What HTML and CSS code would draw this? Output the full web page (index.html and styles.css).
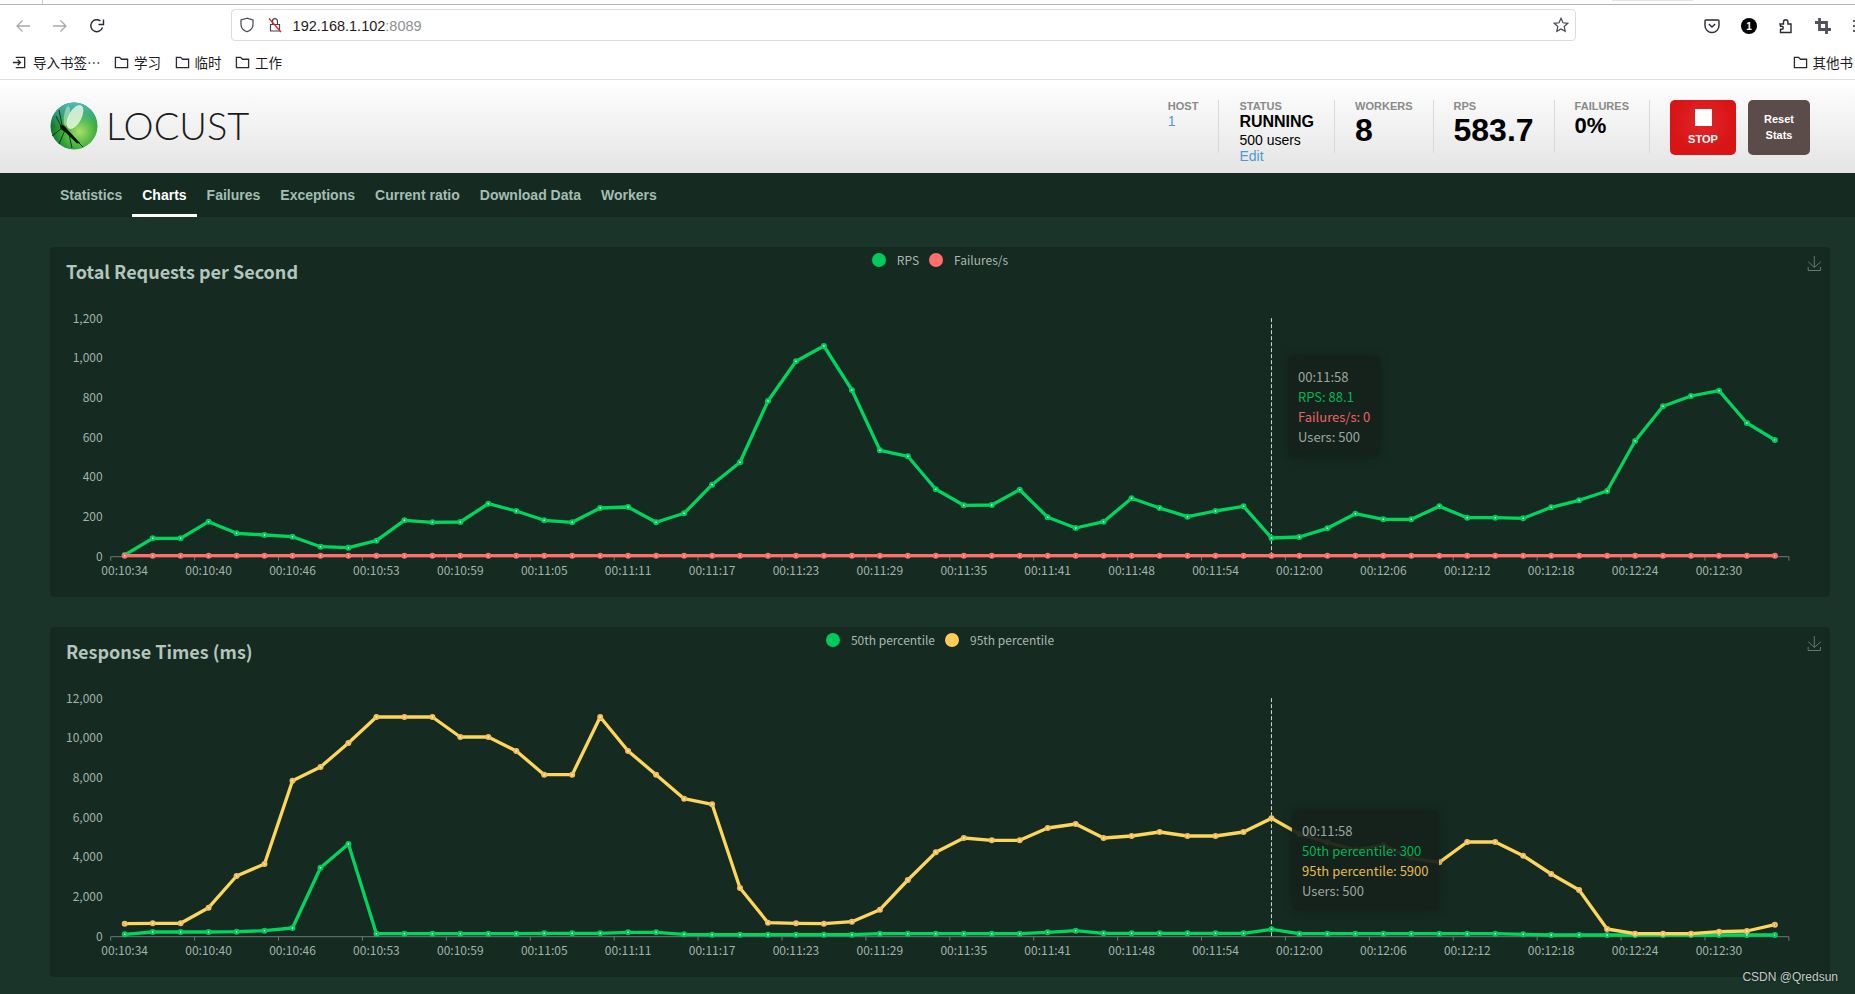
FILE: index.html
```html
<!DOCTYPE html>
<html lang="en">
<head>
<meta charset="utf-8">
<title>Locust</title>
<link rel="stylesheet" href="styles.css">
</head>
<body>
<div class="browser">
  <div class="tabstrip"><span class="tab-tick"></span><span class="tab-edge"></span></div>
  <div class="toolbar">
    <svg class="tb-icon" viewBox="0 0 16 16"><path class="ic-dim" d="M15 8H2M7.5 2.5 2 8l5.500 5.500"/></svg>
    <svg class="tb-icon" viewBox="0 0 16 16"><path class="ic-dim" d="M1 8h13M8.500 2.500 14 8l-5.500 5.500"/></svg>
    <svg class="tb-icon" viewBox="0 0 16 16"><path class="ic-dark" d="M13.500 9.500A6 6 0 1 1 11.500 3M9.500 6.500h5v-5" /></svg>
    <div class="urlbar">
      <svg class="url-shield" viewBox="0 0 16 16"><path class="ic-line" d="M8 1.200 2 3v4.500c0 3.500 2.800 6 6 7.300 3.200-1.300 6-3.800 6-7.300V3z"/></svg>
      <svg class="url-lock" viewBox="0 0 16 16"><path class="ic-line" d="M3.500 7.500h9V14h-9zM5.500 7.500V4.200a2.500 2.500 0 0 1 5 0v3.300"/><path class="ic-red" d="M2 1.500 14 15"/></svg>
      <span class="url-text">192.168.1.102<span class="url-port">:8089</span></span>
      <svg class="url-star" viewBox="0 0 16 16"><path class="ic-line" d="m8 1.300 2 4.500 4.800.5-3.600 3.200 1 4.800L8 11.900l-4.200 2.400 1-4.800L1.200 6.300 6 5.800z"/></svg>
    </div>
    <svg class="tb-icon tb-pocket" viewBox="0 0 16 16"><path class="ic-dark" d="M2 2h12a1 1 0 0 1 1 1v4.500a7 7 0 0 1-14 0V3a1 1 0 0 1 1-1z"/><path class="ic-dark" d="m4.800 6 3.200 3 3.200-3"/></svg>
    <span class="tb-badge">1</span>
    <svg class="tb-icon" viewBox="0 0 16 16"><path class="ic-dark" d="M2 6h3.500V4a2.200 2.200 0 0 1 4.400 0v2H13v8.500H2.500v-3.300h1.300a1.500 1.500 0 0 0 0-3H2.500z"/></svg>
    <svg class="tb-icon" viewBox="0 0 16 16"><path class="ic-crop" d="M4.500 0v11.500H16M0 4.500h11.500V16"/></svg>
    <svg class="tb-icon" viewBox="0 0 16 16"><path class="ic-dark" d="M1 3h14M1 8h14M1 13h14"/></svg>
  </div>
  <div class="bookmarks">
    <span class="bm bm-import">
      <svg class="bm-icon" viewBox="0 0 16 16"><path class="ic-dark" d="M1 8h8M6 5l3 3-3 3M4 2.500h9.500v11H4"/></svg>导入书签…</span>
    <span class="bm"><svg class="bm-icon" viewBox="0 0 16 16"><path class="ic-dark" d="M1.500 13.500v-11h4.500l2 2h6.500v9z"/></svg>学习</span>
    <span class="bm"><svg class="bm-icon" viewBox="0 0 16 16"><path class="ic-dark" d="M1.500 13.500v-11h4.500l2 2h6.500v9z"/></svg>临时</span>
    <span class="bm"><svg class="bm-icon" viewBox="0 0 16 16"><path class="ic-dark" d="M1.500 13.500v-11h4.500l2 2h6.500v9z"/></svg>工作</span>
    <span class="bm bm-other"><svg class="bm-icon" viewBox="0 0 16 16"><path class="ic-dark" d="M1.500 13.500v-11h4.500l2 2h6.500v9z"/></svg>其他书</span>
  </div>
</div>

<header class="app-header">
  <div class="logo">
    <svg class="logo-mark" viewBox="0 0 48 48">
      <defs>
        <radialGradient id="orb" cx="62%" cy="62%" r="70%">
          <stop offset="0" stop-color="#a6e06a"/>
          <stop offset=".5" stop-color="#3eb03a"/>
          <stop offset=".8" stop-color="#16802f"/>
          <stop offset="1" stop-color="#0c5c2c"/>
        </radialGradient>
        <linearGradient id="orbtop" x1="0" y1="0" x2="0" y2="1">
          <stop offset="0" stop-color="#4fc0bc"/>
          <stop offset=".5" stop-color="#4fc0bc" stop-opacity="0"/>
        </linearGradient>
      </defs>
      <circle cx="24" cy="24" r="23.500" fill="url(#orb)"/>
      <circle cx="24" cy="24" r="23.500" fill="url(#orbtop)"/>
      <ellipse cx="25" cy="15" rx="6.500" ry="13" transform="rotate(28 25 15)" fill="#f2fbea" opacity=".78"/>
      <ellipse cx="17" cy="14" rx="3" ry="10" transform="rotate(8 17 14)" fill="#e8f8e0" opacity=".45"/>
      <path class="bug-body" d="M10 23c3-1 5 1 7 4l13 14-3 .5L15 30c-3-2-6-4-5-7z"/>
      <path class="bug-leg" d="M9 8l3 15M6 14l5 10M15 28 9 42M19 32l3 14M24 36l9 9M12 26 2 34"/>
    </svg>
    <span class="logo-text">LOCUST</span>
  </div>
  <div class="stats">
    <div class="stat"><div class="stat-label">HOST</div><div class="stat-link">1</div></div>
    <div class="stat">
      <div class="stat-label">STATUS</div>
      <div class="stat-status">RUNNING</div>
      <div class="stat-users">500 users</div>
      <div class="stat-link stat-edit">Edit</div>
    </div>
    <div class="stat"><div class="stat-label">WORKERS</div><div class="stat-big">8</div></div>
    <div class="stat"><div class="stat-label">RPS</div><div class="stat-big">583.7</div></div>
    <div class="stat"><div class="stat-label">FAILURES</div><div class="stat-mid">0%</div></div>
    <div class="actions">
      <div class="btn btn-stop"><span class="stop-square"></span>STOP</div>
      <div class="btn btn-reset">Reset<br>Stats</div>
    </div>
  </div>
</header>

<nav class="tabs">
  <a class="tab">Statistics</a>
  <a class="tab tab-active">Charts</a>
  <a class="tab">Failures</a>
  <a class="tab">Exceptions</a>
  <a class="tab">Current ratio</a>
  <a class="tab">Download Data</a>
  <a class="tab">Workers</a>
</nav>

<main class="charts">
  <section class="card">
    <div class="card-head">
      <h2 class="card-title">Total Requests per Second</h2>
      <div class="legend">
        <span class="legend-dot dot-green"></span><span class="legend-label">RPS</span>
        <span class="legend-dot dot-red"></span><span class="legend-label">Failures/s</span>
      </div>
      <svg class="save-icon" viewBox="0 0 60 60"><path d="M4.700 22.900 29.300 45.500 54.700 23.400M4.600 43.600V58h49.200V43.600M29.200 45.100V0"/></svg>
    </div>
    <svg class="plot" id="plot-rps" viewBox="0 0 1780 290"></svg>
    <div class="tooltip tooltip-rps">
      <div>00:11:58</div>
      <div class="tip-green">RPS: 88.1</div>
      <div class="tip-red">Failures/s: 0</div>
      <div>Users: 500</div>
    </div>
  </section>
  <section class="card">
    <div class="card-head">
      <h2 class="card-title">Response Times (ms)</h2>
      <div class="legend">
        <span class="legend-dot dot-green"></span><span class="legend-label">50th percentile</span>
        <span class="legend-dot dot-yellow"></span><span class="legend-label">95th percentile</span>
      </div>
      <svg class="save-icon" viewBox="0 0 60 60"><path d="M4.700 22.900 29.300 45.500 54.700 23.400M4.600 43.600V58h49.200V43.600M29.200 45.100V0"/></svg>
    </div>
    <svg class="plot" id="plot-times" viewBox="0 0 1780 290"></svg>
    <div class="tooltip tooltip-times">
      <div>00:11:58</div>
      <div class="tip-green">50th percentile: 300</div>
      <div class="tip-yellow">95th percentile: 5900</div>
      <div>Users: 500</div>
    </div>
  </section>
</main>
<div class="watermark">CSDN @Qredsun</div>
<script src="charts.js"></script>
</body>
</html>
```
FILE: styles.css
```css
* { box-sizing: border-box; }
html, body { margin: 0; padding: 0; }
body {
  width: 1855px;
  height: 994px;
  overflow: hidden;
  position: relative;
  background: #1a342a;
  font-family: "Liberation Sans", Arial, sans-serif;
}

/* browser chrome */
.browser { background: #fff; }
.tabstrip {
  height: 5px;
  border-bottom: 1px solid #b4b4b4;
  background: #fdfdfd;
  position: relative;
}
.tab-tick { position: absolute; left: 42px; top: 0; width: 1px; height: 4px; background: #ccc; }
.tab-edge { position: absolute; left: 1612px; top: 0; width: 81px; height: 1px; background: #e4e4e4; }
.toolbar {
  height: 42px;
  display: flex;
  align-items: center;
  padding-left: 15px;
  gap: 21px;
  overflow: hidden;
}
.tb-icon { width: 16px; height: 16px; flex: none; fill: none; }
.ic-dim { fill: none; stroke: #a9a9ae; stroke-width: 1.300; }
.ic-dark { fill: none; stroke: #2b2a33; stroke-width: 1.400; }
.ic-line { fill: none; stroke: #45454c; stroke-width: 1.200; }
.ic-red { fill: none; stroke: #d8203a; stroke-width: 1.300; }
.ic-crop { fill: none; stroke: #50505a; stroke-width: 2.800; }
.urlbar {
  width: 1345px;
  height: 32px;
  margin-left: 105px;
  margin-right: 107px;
  margin-top: -2px;
  flex: none;
  border: 1px solid #dcdcde;
  border-radius: 4px;
  display: flex;
  align-items: center;
  padding-left: 7px;
  padding-right: 6px;
}
.url-shield, .url-lock, .url-star { width: 16px; height: 16px; flex: none; }
.url-lock { margin-left: 12px; }
.url-text { margin-left: 9.600px; padding-top: 2px; font-size: 14.500px; color: #1c1b22; }
.url-port { color: #8f8f94; }
.url-star { margin-left: auto; }
.tb-pocket { margin-left: 0; }
.tb-badge {
  width: 16px;
  height: 16px;
  flex: none;
  border-radius: 50%;
  background: #000;
  color: #fff;
  font-size: 10px;
  font-weight: 700;
  display: flex;
  align-items: center;
  justify-content: center;
}
.bookmarks {
  height: 33px;
  border-bottom: 1px solid #dfdfe0;
  display: flex;
  align-items: center;
  padding-left: 12px;
  padding-bottom: 2px;
  font-family: "Noto Sans CJK SC", sans-serif;
  font-size: 13.500px;
  color: #1c1b22;
  white-space: nowrap;
}
.bm { display: flex; align-items: center; gap: 5px; margin-right: 13.500px; }
.bm-import { gap: 6px; }
.bm-icon { width: 15px; height: 15px; flex: none; }
.bm-other { margin-left: auto; margin-right: 2px; }

/* app header */
.app-header {
  height: 93px;
  display: flex;
  justify-content: space-between;
  padding: 0 45px 0 50px;
  background: linear-gradient(#ffffff, #e4e4e4);
}
.logo { display: flex; align-items: center; gap: 8px; padding-bottom: 1px; }
.logo-mark { width: 48px; height: 48px; flex: none; }
.bug-body { fill: #0a140c; }
.bug-leg { fill: none; stroke: #0a140c; stroke-width: .800; }
.logo-text {
  font-family: Lato, sans-serif;
  font-weight: 300;
  font-size: 38px;
  line-height: 44px;
  padding-bottom: 3px;
  color: #1a1a1a;
}
.stats { display: flex; align-items: flex-start; padding-top: 20px; }
.stat {
  height: 53px;
  padding: 0 20px;
  border-right: 1px solid #d9d9d9;
}
.stat-label { font-size: 11px; font-weight: 700; color: #8a8a8a; line-height: 12px; }
.stat-link { font-size: 14px; color: #4d9bcf; line-height: 18px; }
.stat-status { font-size: 16px; font-weight: 700; color: #000; line-height: 18px; margin-top: 1px; }
.stat-users { font-size: 14px; color: #000; line-height: 16px; margin-top: 1px; }
.stat-edit { line-height: 16px; margin-top: 0; }
.stat-big { font-size: 32px; font-weight: 700; color: #000; line-height: 36px; }
.stat-mid { font-size: 22px; font-weight: 700; color: #000; line-height: 26px; margin-top: 1px; }
.actions { display: flex; gap: 12px; margin-left: 20px; }
.btn {
  height: 55px;
  border-radius: 5px;
  color: #fff;
  font-size: 11px;
  font-weight: 700;
  text-align: center;
}
.btn-stop {
  width: 66px;
  padding-top: 9px;
  line-height: 14px;
  background: radial-gradient(circle at 50% 40%, #e2262a, #d81414 70%);
}
.stop-square { display: block; width: 17px; height: 17px; background: #fff; margin: 0 auto 6px; }
.btn-reset {
  width: 62px;
  padding-top: 11px;
  line-height: 16px;
  background: #5b4b49;
}

/* tabs */
.tabs {
  height: 44px;
  display: flex;
  padding-left: 50px;
  background: #152b22;
}
.tab {
  padding: 0 10px;
  height: 44px;
  line-height: 44px;
  font-size: 14px;
  font-weight: 700;
  color: #a4bdb2;
}
.tab-active { color: #fff; border-bottom: 3px solid #fff; }

/* charts */
.charts {
  display: flex;
  flex-direction: column;
  gap: 30px;
  padding: 30px 25px 0 50px;
}
.card {
  position: relative;
  height: 350px;
  background: #152a21;
  border-radius: 4px;
  font-family: "Noto Sans CJK SC", "Noto Sans", sans-serif;
}
.card-head {
  height: 60px;
  display: grid;
  grid-template-columns: 1fr auto 1fr;
  align-items: start;
  padding: 0 8px;
}
.card-title {
  margin: 11px 0 0 8px;
  font-size: 18px;
  line-height: 26px;
  font-weight: 700;
  color: #b3c5bc;
}
.legend {
  display: flex;
  align-items: center;
  height: 25px;
  font-size: 12px;
  color: #a9b8b1;
}
.legend-dot { width: 14px; height: 14px; border-radius: 50%; }
.legend-label { margin-left: 11px; margin-right: 10px; }
.legend-label:last-child { margin-right: 0; }
.dot-green { background: #00ca5a; }
.dot-red { background: #ff6d6d; }
.dot-yellow { background: #ffca5a; }
.save-icon {
  justify-self: end;
  margin-top: 9px;
  width: 15px;
  height: 15px;
  fill: none;
  stroke: #66786f;
  stroke-width: 4;
}
.plot { display: block; width: 1780px; height: 290px; }
.axis-line { stroke: #6b7a74; stroke-width: 1; fill: none; }
.axis-text { font-size: 12px; fill: #a3b3ac; }
.crosshair { stroke: #d5dcd9; stroke-width: 1; stroke-dasharray: 4 2; }
.series { fill: none; stroke-width: 3.300; stroke-linejoin: round; }
.dot-core { fill: #f2fff6; stroke: none; }
.s-green { stroke: #00d65e; }
.s-red { stroke: #ff6d6d; }
.s-yellow { stroke: #fdd65a; }
.m-green { fill: none; stroke: #00ca5a; stroke-width: 2; }
.m-red { fill: none; stroke: #ff6d6d; stroke-width: 2; }
.m-yellow { fill: none; stroke: #f6bd5c; stroke-width: 2; }

.tooltip {
  position: absolute;
  padding: 11px 10px 10px;
  border-radius: 6px;
  background: rgba(22, 32, 27, .93);
  box-shadow: 0 0 8px rgba(14, 24, 19, .35);
  font-size: 13px;
  line-height: 20px;
  color: #9aa7a1;
  white-space: nowrap;
}
.tooltip-rps { left: 1238px; top: 109px; width: 92px; height: 101px; }
.tooltip-times { left: 1242px; top: 183px; width: 147px; height: 101px; }
.tip-green { color: #00b653; }
.tip-red { color: #e96464; }
.tip-yellow { color: #e6b955; }

.watermark {
  position: absolute;
  right: 17px;
  top: 969px;
  font-size: 12px;
  line-height: 16px;
  color: #c4ccc8;
  text-shadow: 0 0 2px #0c1a14;
}
```
FILE: charts.js
```js
var NS = 'http://www.w3.org/2000/svg';
var X0 = 60.7, STEP = 27.97, AXIS = 249.7;
var TICK_Y = [249.7, 209.7, 169.7, 130.3, 90.3, 50.3, 11.7];
var LABELS = ['00:10:34','00:10:40','00:10:46','00:10:53','00:10:59','00:11:05','00:11:11','00:11:17','00:11:23','00:11:29','00:11:35','00:11:41','00:11:48','00:11:54','00:12:00','00:12:06','00:12:12','00:12:18','00:12:24','00:12:30'];

function el(parent, name, attrs, text) {
  var e = document.createElementNS(NS, name);
  for (var k in attrs) e.setAttribute(k, attrs[k]);
  if (text !== undefined) e.textContent = text;
  parent.appendChild(e);
  return e;
}
function px(i) { return X0 + STEP * (i + 0.5); }

function draw(id, cfg) {
  var svg = document.getElementById(id);
  var offset = cfg.top;
  cfg.ticks.forEach(function (t, i) {
    el(svg, 'text', { x: 52.7, y: TICK_Y[i] + 4.3, 'text-anchor': 'end', 'class': 'axis-text' }, t);
  });
  el(svg, 'path', { d: 'M' + X0 + ' ' + AXIS + 'H' + (X0 + STEP * 60), 'class': 'axis-line' });
  for (var i = 0; i <= 60; i += 3) {
    var tx = X0 + STEP * i;
    el(svg, 'path', { d: 'M' + tx + ' ' + AXIS + 'v4', 'class': 'axis-line' });
  }
  LABELS.forEach(function (t, n) {
    el(svg, 'text', { x: px(n * 3), y: AXIS + 18.3, 'text-anchor': 'middle', 'class': 'axis-text' }, t);
  });
  el(svg, 'path', { d: 'M' + px(41) + ' ' + (AXIS - 238.5) + 'V' + AXIS, 'class': 'crosshair' });
  cfg.series.forEach(function (s) {
    var pts = s.data.map(function (y, i) { return px(i).toFixed(1) + ',' + (y - offset).toFixed(1); });
    el(svg, 'polyline', { points: pts.join(' '), 'class': 'series s-' + s.color });
    s.data.forEach(function (y, i) {
      el(svg, 'circle', { cx: px(i).toFixed(1), cy: (y - offset).toFixed(1), r: 2, 'class': 'm-' + s.color });
      el(svg, 'circle', { cx: px(i).toFixed(1), cy: (y - offset).toFixed(1), r: 0.8, 'class': 'dot-core' });
    });
  });
}

function repeat(v, n) { var a = []; while (n--) a.push(v); return a; }

draw('plot-rps', {
  top: 307,
  ticks: ['0', '200', '400', '600', '800', '1,000', '1,200'],
  series: [
    { color: 'green', data: [555,538.3,538.3,521.7,533.3,535,536.7,546.7,547.7,540.7,520.3,522.3,522,503.7,511,520.3,522.3,508,507,522.3,513.3,484.7,462.3,401,361.3,346,390,450.3,456.3,489.3,505.3,505,489.7,517.3,528,521.7,498.3,508,516.7,511,506.3,538,537,528.3,513.7,519.3,519.3,506.3,517.7,517.7,518.3,507.3,500.3,491,441,406.3,396,390.7,423,440] },
    { color: 'red', data: repeat(555.7, 60) }
  ]
});

draw('plot-times', {
  top: 687,
  ticks: ['0', '2,000', '4,000', '6,000', '8,000', '10,000', '12,000'],
  series: [
    { color: 'green', data: [934.3,932,932,932,931.7,930.7,928,867.7,844,933.7].concat(repeat(933.7,5),[933.3,933.3,933.3,932.3,932.3,934.3],repeat(934.7,6),repeat(933.7,6),[932.3,930.7],repeat(933.3,6),[929.3],repeat(933.7,8),[934.3],repeat(935,9)) },
    { color: 'yellow', data: [923.7,923.3,923.3,907.7,876,864,780.7,767,743,717,717,717,737,737,751,774.7,774.7,717,751,774.7,798.7,804.3,888,922.7,923.3,923.7,921.7,909.7,880,852.3,838,840.3,840.3,828,824,838,836,832,836,836,832,818.3,834,842.3,850,845,858.3,862.3,842,842,855.7,874,890,929,933.7,933.7,933.7,931.7,931,924.7] }
  ]
});
```
